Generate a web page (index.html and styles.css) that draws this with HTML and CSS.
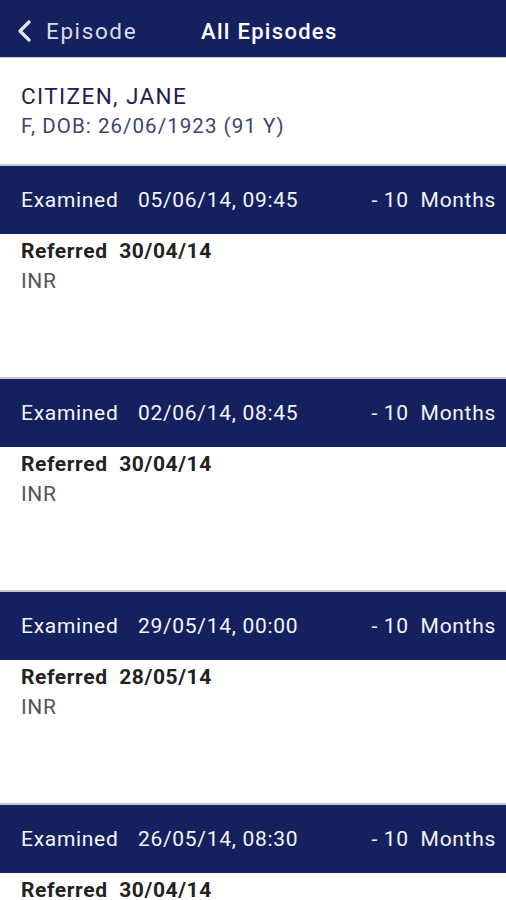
FILE: index.html
```html
<!DOCTYPE html>
<html>
<head>
<meta charset="utf-8">
<link rel="stylesheet" href="styles.css">
</head>
<body>
<div class="app">
  <header class="topbar">
    <div class="back">
      <svg class="chev" width="16" height="24" viewBox="0 0 16 24"><path d="M13 3 L4 12 L13 21" fill="none" stroke="#e4e7f0" stroke-width="3.2" stroke-linecap="round" stroke-linejoin="round"/></svg>
      <span class="back-label">Episode</span>
    </div>
    <div class="title">All Episodes</div>
  </header>
  <section class="patient">
    <div class="name">CITIZEN, JANE</div>
    <div class="dob">F, DOB: 26/06/1923 (91 Y)</div>
  </section>
  <div class="episode">
    <div class="ep-head"><span class="ex">Examined</span><span class="dt">05/06/14, 09:45</span><span class="ago">- 10&nbsp; Months</span></div>
    <div class="ep-body"><div class="ref">Referred&nbsp; 30/04/14</div><div class="test">INR</div></div>
  </div>
  <div class="episode">
    <div class="ep-head"><span class="ex">Examined</span><span class="dt">02/06/14, 08:45</span><span class="ago">- 10&nbsp; Months</span></div>
    <div class="ep-body"><div class="ref">Referred&nbsp; 30/04/14</div><div class="test">INR</div></div>
  </div>
  <div class="episode">
    <div class="ep-head"><span class="ex">Examined</span><span class="dt">29/05/14, 00:00</span><span class="ago">- 10&nbsp; Months</span></div>
    <div class="ep-body"><div class="ref">Referred&nbsp; 28/05/14</div><div class="test">INR</div></div>
  </div>
  <div class="episode">
    <div class="ep-head"><span class="ex">Examined</span><span class="dt">26/05/14, 08:30</span><span class="ago">- 10&nbsp; Months</span></div>
    <div class="ep-body"><div class="ref">Referred&nbsp; 30/04/14</div><div class="test">INR</div></div>
  </div>
</div>
</body>
</html>
```
FILE: styles.css
```css
html, body { margin: 0; padding: 0; background: #fff; }
body { font-family: Roboto, "Noto Sans", sans-serif; width: 506px; height: 900px; overflow: hidden; }
.app { display: flex; flex-direction: column; }
.topbar {
  height: 58px; background: #15215e; display: flex; align-items: center;
  border-bottom: 1px solid #c9ccd8; box-sizing: border-box; padding-top: 5px;
}
.back { display: flex; align-items: center; padding-left: 16px; width: 185px; }
.chev { margin-right: 14px; }
.back-label { color: #d8dce8; font-size: 22.5px; letter-spacing: 1.6px; }
.title { color: #fff; font-size: 22px; font-weight: 500; letter-spacing: 1.3px; }
.patient { height: 106px; padding: 24px 21px 0; box-sizing: border-box; }
.name { color: #1b2150; font-size: 22.5px; line-height: 28px; letter-spacing: 1.4px; }
.dob { color: #3c4470; font-size: 20.5px; line-height: 26px; margin-top: 3px; letter-spacing: 1.05px; }
.episode { height: 213px; display: flex; flex-direction: column; }
.ep-head {
  height: 70px; background: #15215e; border-top: 2px solid #c5c8d4; box-sizing: border-box;
  display: flex; align-items: center; padding: 0 10px 0 21px; color: #f4f5f9;
  font-size: 21px; letter-spacing: 0.7px;
}
.ex { width: 117px; }
.dt { flex: 1; }
.ago { white-space: nowrap; }
.ep-body { padding: 2px 21px 0; }
.ref { font-weight: 700; font-size: 21px; color: #222; line-height: 30px; letter-spacing: 0.6px; }
.test { font-size: 21px; color: #555; line-height: 30px; letter-spacing: 0.6px; }
```
